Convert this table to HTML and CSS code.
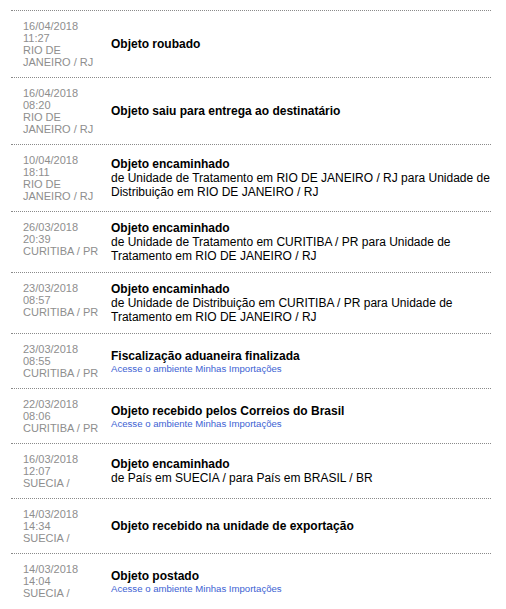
FILE: index.html
```html
<!DOCTYPE html>
<html lang="pt-BR">
<head>
<meta charset="utf-8">
<title>Rastreamento</title>
<link rel="stylesheet" href="styles.css">
</head>
<body>
<div class="tracking">
  <div class="row">
    <div class="when">16/04/2018<br>11:27<br>RIO DE JANEIRO / RJ</div>
    <div class="what"><strong class="title">Objeto roubado</strong></div>
  </div>
  <div class="row">
    <div class="when">16/04/2018<br>08:20<br>RIO DE JANEIRO / RJ</div>
    <div class="what"><strong class="title">Objeto saiu para entrega ao destinatário</strong></div>
  </div>
  <div class="row">
    <div class="when">10/04/2018<br>18:11<br>RIO DE JANEIRO / RJ</div>
    <div class="what"><strong class="title">Objeto encaminhado</strong><span class="detail">de Unidade de Tratamento em RIO DE JANEIRO / RJ para Unidade de Distribuição em RIO DE JANEIRO / RJ</span></div>
  </div>
  <div class="row">
    <div class="when">26/03/2018<br>20:39<br>CURITIBA / PR</div>
    <div class="what"><strong class="title">Objeto encaminhado</strong><span class="detail">de Unidade de Tratamento em CURITIBA / PR para Unidade de Tratamento em RIO DE JANEIRO / RJ</span></div>
  </div>
  <div class="row">
    <div class="when">23/03/2018<br>08:57<br>CURITIBA / PR</div>
    <div class="what"><strong class="title">Objeto encaminhado</strong><span class="detail">de Unidade de Distribuição em CURITIBA / PR para Unidade de Tratamento em RIO DE JANEIRO / RJ</span></div>
  </div>
  <div class="row">
    <div class="when">23/03/2018<br>08:55<br>CURITIBA / PR</div>
    <div class="what"><strong class="title">Fiscalização aduaneira finalizada</strong><a class="link" href="#">Acesse o ambiente Minhas Importações</a></div>
  </div>
  <div class="row">
    <div class="when">22/03/2018<br>08:06<br>CURITIBA / PR</div>
    <div class="what"><strong class="title">Objeto recebido pelos Correios do Brasil</strong><a class="link" href="#">Acesse o ambiente Minhas Importações</a></div>
  </div>
  <div class="row">
    <div class="when">16/03/2018<br>12:07<br>SUECIA /</div>
    <div class="what"><strong class="title">Objeto encaminhado</strong><span class="detail">de País em SUECIA / para País em BRASIL / BR</span></div>
  </div>
  <div class="row">
    <div class="when">14/03/2018<br>14:34<br>SUECIA /</div>
    <div class="what"><strong class="title">Objeto recebido na unidade de exportação</strong></div>
  </div>
  <div class="row">
    <div class="when">14/03/2018<br>14:04<br>SUECIA /</div>
    <div class="what"><strong class="title">Objeto postado</strong><a class="link" href="#">Acesse o ambiente Minhas Importações</a></div>
  </div>
</div>
</body>
</html>
```
FILE: styles.css
```css
html, body {
  margin: 0;
  padding: 0;
  background: #fff;
}

body {
  font-family: "Liberation Sans", Arial, sans-serif;
  color: #000;
  padding: 10px 0 0 11px;
}

.tracking {
  width: 480px;
}

.row {
  display: flex;
  border-top: 1px dotted #8a8a8a;
}

.when {
  box-sizing: border-box;
  flex: 0 0 89px;
  padding: 9px 0 9px 12px;
  font-size: 11px;
  line-height: 12px;
  color: #8e8e8e;
}

.what {
  box-sizing: border-box;
  flex: 1 1 auto;
  display: flex;
  flex-direction: column;
  justify-content: center;
  padding: 9px 0 9px 11px;
  font-size: 12px;
  line-height: 14px;
}

.title {
  font-weight: bold;
}

.detail {
  display: block;
}

.link {
  display: block;
  font-size: 9.6px;
  line-height: 11px;
  color: #3d5fd3;
  text-decoration: none;
}
```
